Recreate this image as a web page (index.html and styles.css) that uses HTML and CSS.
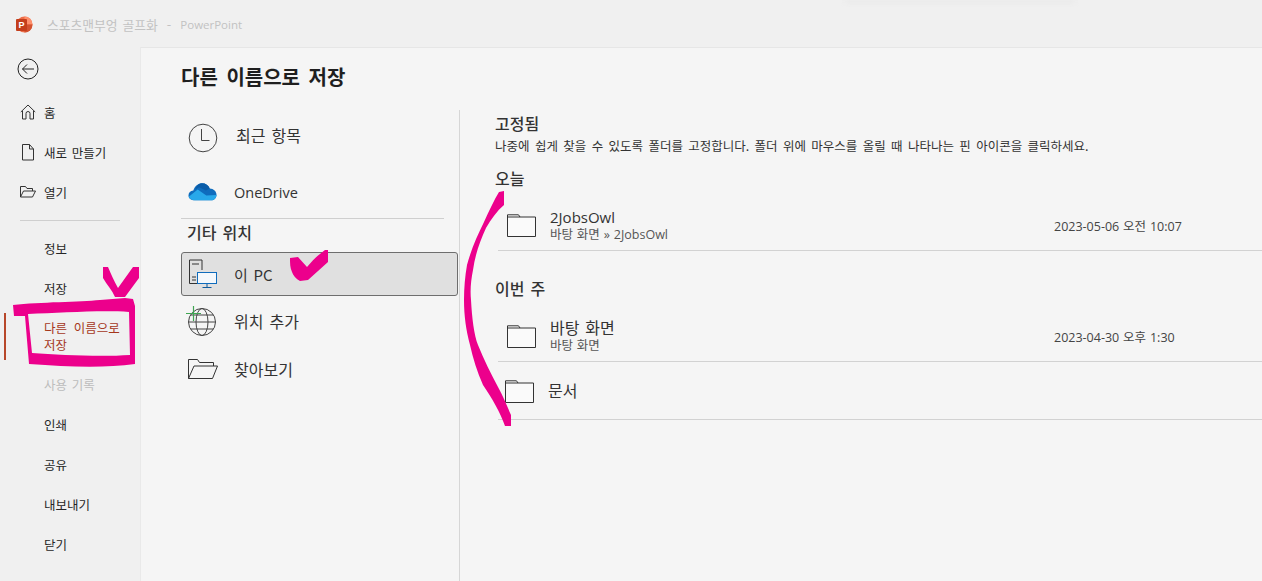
FILE: index.html
```html
<!DOCTYPE html>
<html lang="ko">
<head>
<meta charset="utf-8">
<title>다른 이름으로 저장</title>
<link rel="stylesheet" href="styles.css">
</head>
<body>
<header class="titlebar">
  <svg class="app-logo" width="17" height="17" viewBox="0 0 17 17"><circle cx="8.5" cy="8.5" r="8" fill="#ed6c47"/><path d="M8.5.5a8 8 0 0 1 8 8h-8z" fill="#ff8f6b"/><path d="M8.5 8.5h8a8 8 0 0 1-8 8z" fill="#d35230"/><rect x="0" y="3" width="11" height="12" rx="1" fill="#c43e1c"/><text x="5.500" y="12.200" class="logo-letter">P</text></svg>
  <span class="doc-name">스포츠맨부엉 골프화</span><span class="doc-sep">-</span><span class="doc-app">PowerPoint</span>
  <div class="title-shadow"></div>
</header>
<div class="shell">
  <nav class="sidebar">
    <button class="back" aria-label="뒤로">
      <svg width="22" height="22" viewBox="0 0 22 22" fill="none" stroke="#222" stroke-width="1"><circle cx="11" cy="11" r="10"/><path d="M17 11H5.500M10 6.500 5.500 11l4.500 4.500"/></svg>
    </button>
    <a class="nav-item"><svg class="nav-icon" width="16" height="16" viewBox="0 0 16 16" fill="none" stroke="#333"><path d="M.8 8 8 1l7.200 7M2.500 7v8h3.500V9.500a2 2 0 0 1 4 0V15h3.500V7"/></svg>홈</a>
    <a class="nav-item"><svg class="nav-icon" width="16" height="17" viewBox="0 0 16 17" fill="none" stroke="#333"><path d="M2.500.5h7l4 4.500v11h-11zM9.500.5V5h4"/></svg>새로 만들기</a>
    <a class="nav-item"><svg class="nav-icon" width="16" height="12" viewBox="0 0 16 12" fill="none" stroke="#333"><path d="M.5 11V.5h5l1.500 2h5.500V5M.5 11 3.500 5h12l-3 6z"/></svg>열기</a>
    <hr class="nav-rule">
    <a class="nav-item plain">정보</a>
    <a class="nav-item plain">저장</a>
    <a class="nav-item plain active"><span>다른 이름으로<br>저장</span></a>
    <a class="nav-item plain disabled">사용 기록</a>
    <a class="nav-item plain">인쇄</a>
    <a class="nav-item plain">공유</a>
    <a class="nav-item plain">내보내기</a>
    <a class="nav-item plain">닫기</a>
  </nav>
  <main class="content">
    <h1 class="page-title">다른 이름으로 저장</h1>
    <div class="columns">
      <section class="places">
        <a class="place recent">
          <svg width="30" height="30" viewBox="0 0 30 30" fill="none" stroke="#444"><circle cx="15" cy="15" r="13.800"/><path d="M13.500 6v11.500h8"/></svg>
          <span>최근 항목</span>
        </a>
        <a class="place onedrive">
          <svg width="30" height="20" viewBox="0 0 30 20"><path d="M7 18.500C3 18.500.5 16.500.5 13.500c0-2.700 2-4.700 5-5C7 4 10.500 1 14.500 1c3.700 0 6.700 2 8 5.500 4 .2 7 3 7 6.500 0 3-2.500 5.500-5.500 5.500z" fill="#0f6cbd"/><path d="M14.500 1c3.700 0 6.700 2 8 5.500l-4 2-7-3.500-4 2.500C9 3.500 11 1 14.500 1z" fill="#0a5ca8"/><path d="M.8 15 10 7.500l9 6 10.500-.5c0 3-2.500 5.500-5.500 5.500H7C4 18.500 1.800 17.500.8 15z" fill="#28a8ea"/></svg>
          <span>OneDrive</span>
        </a>
        <hr class="place-rule">
        <h2 class="place-heading">기타 위치</h2>
        <a class="place this-pc">
          <svg width="30" height="30" viewBox="0 0 30 30" fill="none"><path d="M14 24.500H1.500V1H14v10" stroke="#333"/><path d="M4 5h7M4 18h4M4 21h4" stroke="#333"/><rect x="9.500" y="13.500" width="19" height="11" fill="#f4f8fc" stroke="#0f6cbd"/><path d="M19 25v3M14.500 28.500h9" stroke="#0f5a9c"/></svg>
          <span>이 PC</span>
        </a>
        <a class="place add">
          <svg width="32" height="32" viewBox="0 0 32 32" fill="none"><g stroke="#444"><circle cx="17" cy="17" r="13.500"/><ellipse cx="17" cy="17" rx="6" ry="13.500"/><path d="M3.500 17h27M5.500 10h23M5.500 24h23"/></g><path d="M1 8.500h15M8.500 1v15" stroke="#3fa652" stroke-width="1.200"/></svg>
          <span>위치 추가</span>
        </a>
        <a class="place browse">
          <svg width="30" height="20" viewBox="0 0 30 20" fill="none" stroke="#333"><path d="M.5 19.500V.5h9l2 3h14V7M.5 19.500 6 7h23.500l-5 12.500z"/></svg>
          <span>찾아보기</span>
        </a>
      </section>
      <section class="recent-list">
        <h2 class="group-title pinned">고정됨</h2>
        <p class="hint">나중에 쉽게 찾을 수 있도록 폴더를 고정합니다. 폴더 위에 마우스를 올릴 때 나타나는 핀 아이콘을 클릭하세요.</p>
        <h2 class="group-title today">오늘</h2>
        <div class="row first">
          <svg class="folder" width="29" height="23" viewBox="0 0 29 23" fill="#fafafa" stroke="#333"><path d="M.5 22.500V.8h11l1.500 2.200h15.500v19.500zM.5 3H13"/></svg>
          <div class="row-text"><div class="row-name">2JobsOwl</div><div class="row-path">바탕 화면 » 2JobsOwl</div></div>
          <div class="row-date">2023-05-06 오전 10:07</div>
        </div>
        <h2 class="group-title week">이번 주</h2>
        <div class="row second">
          <svg class="folder" width="29" height="23" viewBox="0 0 29 23" fill="#fafafa" stroke="#333"><path d="M.5 22.500V.8h11l1.500 2.200h15.500v19.500zM.5 3H13"/></svg>
          <div class="row-text"><div class="row-name ko">바탕 화면</div><div class="row-path">바탕 화면</div></div>
          <div class="row-date">2023-04-30 오후 1:30</div>
        </div>
        <div class="row single">
          <svg class="folder" width="29" height="23" viewBox="0 0 29 23" fill="#fafafa" stroke="#333"><path d="M.5 22.500V.8h11l1.500 2.200h15.500v19.500zM.5 3H13"/></svg>
          <div class="row-text"><div class="row-name ko">문서</div></div>
        </div>
      </section>
    </div>
  </main>
</div>
<svg class="scribbles" width="1262" height="581" viewBox="0 0 1262 581" fill="#ec008c" aria-hidden="true">
  <path fill-rule="evenodd" d="M13 305 C40 302 80 302 100 300 L125 298 L133 299 L135 306 L135 364 C105 368 70 367 29 364 L25 316 L14 316z M28 314 L32 353 C60 355 100 357 130 355 L129 312 C100 310 60 313 28 314z"/>
  <path d="M103 267 L108 267 C111 274 114 281 118 288 L133 267 L139 267 L139 278 L125 297 L115 297 C112 290 107 285 103 278z"/>
  <path d="M290 258 L298 257 L307 267 C312 261 318 255 325 250 L328 250 L328 262 L308 280 L300 281 C296 279 293 275 292 272 C290 268 290 263 290 258z"/>
  <path d="M499 192 L504 191 L504 205 C497 211 491 219 486 228 C480 241 475 255 473 270 C471 280 470 290 471 300 C472 318 474 335 478 345 C484 360 491 374 498 387 C503 396 507 406 511 415 L511 426 L505 426 C500 412 492 398 483 385 C477 372 473 358 470 345 C466 330 464 316 464 300 C464 288 465 276 467 265 C471 250 477 236 484 222 C489 211 494 200 499 192z"/>
</svg>
</body>
</html>
```
FILE: styles.css
```css
* { box-sizing: border-box; word-spacing: .1em; }
html, body { margin: 0; height: 100%; }
body {
  width: 1262px;
  height: 581px;
  overflow: hidden;
  position: relative;
  background: #f0f0f0;
  color: #262626;
  font-family: "Noto Sans CJK KR", "Noto Sans", sans-serif;
  font-size: 13px;
}
.titlebar {
  height: 47px;
  padding: 16px 0 0 16px;
  display: flex;
  align-items: flex-start;
  position: relative;
  color: #c2c2c2;
  font-size: 12.800px;
  line-height: 17px;
}
.app-logo { flex: none; }
.logo-letter { font: bold 9px "Liberation Sans", sans-serif; fill: #fff; text-anchor: middle; }
.doc-name { margin-left: 14px; }
.doc-sep { margin-left: 9px; }
.doc-app { margin-left: 9px; font-family: "Open Sans", sans-serif; font-size: 11.500px; }
.title-shadow {
  position: absolute;
  left: 845px;
  top: 0;
  width: 230px;
  height: 3px;
  background: #e9e9e9;
  filter: blur(2px);
}
.shell { display: flex; height: 534px; }
.sidebar {
  width: 140px;
  flex: none;
  display: flex;
  flex-direction: column;
}
.back {
  width: 22px;
  height: 22px;
  margin: 11px 0 12px 17px;
  padding: 0;
  border: 0;
  background: none;
}
.back svg { display: block; }
.nav-item {
  height: 40px;
  flex: none;
  display: flex;
  align-items: center;
  padding-left: 20px;
  color: #262626;
  font-size: 12.500px;
  white-space: nowrap;
}
.nav-icon { width: 16px; margin-right: 8px; flex: none; }
.nav-item.plain { padding-left: 44px; }
.nav-rule {
  margin: 8px 20px 7px;
  width: 100px;
  height: 1px;
  border: 0;
  background: #cfcfcf;
}
.active {
  height: 56px;
  color: #a5371b;
  line-height: 17px;
  position: relative;
  word-spacing: .25em;
}
.active span { word-spacing: .25em; }
.active::before {
  content: "";
  position: absolute;
  left: 4px;
  top: 5px;
  width: 2px;
  height: 47px;
  background: #b7472a;
}
.disabled { color: #bdbdbd; }
.content {
  flex: 1;
  background: #f5f5f5;
  border-top: 1px solid #e6e6e6;
  border-left: 1px solid #e9e9e9;
  padding: 0 0 0 40px;
  min-width: 0;
}
.page-title {
  margin: 15px 0 19px;
  font-size: 20px;
  line-height: 28px;
  font-weight: 700;
  color: #1f1f1f;
  word-spacing: .15em;
}
.columns { display: flex; height: 471px; }
.places {
  width: 279px;
  flex: none;
  border-right: 1px solid #d6d6d6;
  padding-right: 1px;
}
.place {
  height: 48px;
  display: flex;
  align-items: center;
  font-size: 16px;
  color: #333;
  padding-left: 7px;
  width: 277px;
}
.place svg { flex: none; }
.recent { margin-top: 4px; }
.recent span { margin-left: 18px; margin-bottom: 6px; }
.onedrive { margin-top: 6px; }
.onedrive svg { width: 29px; }
.onedrive span { margin-left: 17px; font-family: "Open Sans", sans-serif; font-size: 14.500px; }
.place-rule {
  margin: 2px 0 0;
  width: 263px;
  height: 1px;
  border: 0;
  background: #cfcfcf;
}
.place-heading {
  margin: 2px 0 9px 6px;
  font-size: 16px;
  line-height: 22px;
  font-weight: 500;
  color: #333;
}
.this-pc {
  height: 44px;
  background: #e0e0e0;
  border: 1px solid #6e6e6e;
  border-radius: 3px;
  padding-left: 6px;
}
.this-pc span { margin-left: 16px; font-size: 15px; }
.add { margin-top: 1px; padding-left: 4px; }
.add span { margin-left: 17px; }
.browse span { margin-left: 16px; }
.recent-list { flex: 1; padding-left: 35px; min-width: 0; }
.group-title {
  margin: 0;
  font-size: 16px;
  line-height: 20px;
  font-weight: 500;
  color: #333;
}
.pinned { margin-top: 3px; }
.hint {
  margin: 4px 0 0;
  font-size: 12.500px;
  line-height: 18px;
  color: #333;
  white-space: nowrap;
  word-spacing: .15em;
}
.today { margin-top: 13px; }
.week { margin-top: 27px; }
.row {
  height: 50px;
  margin-left: 3px;
  border-bottom: 1px solid #d2d2d2;
  display: flex;
  align-items: center;
  padding-left: 9px;
}
.first { margin-top: 13px; }
.second { margin-top: 14px; }
.single { height: 58px; padding-left: 7px; padding-top: 2px; }
.folder { flex: none; }
.row-text { margin-left: 14px; width: 504px; }
.row-name { font-size: 15px; line-height: 19px; color: #333; font-family: "Open Sans", "Noto Sans CJK KR", sans-serif; }
.row-name.ko { font-size: 16px; }
.row-path { font-size: 12.500px; line-height: 16px; color: #555; font-family: "Open Sans", "Noto Sans CJK KR", sans-serif; word-spacing: .05em; }
.row-date { font-size: 12.500px; color: #444; font-family: "Open Sans", "Noto Sans CJK KR", sans-serif; word-spacing: .05em; }
.scribbles { position: absolute; left: 0; top: 0; pointer-events: none; }
```
